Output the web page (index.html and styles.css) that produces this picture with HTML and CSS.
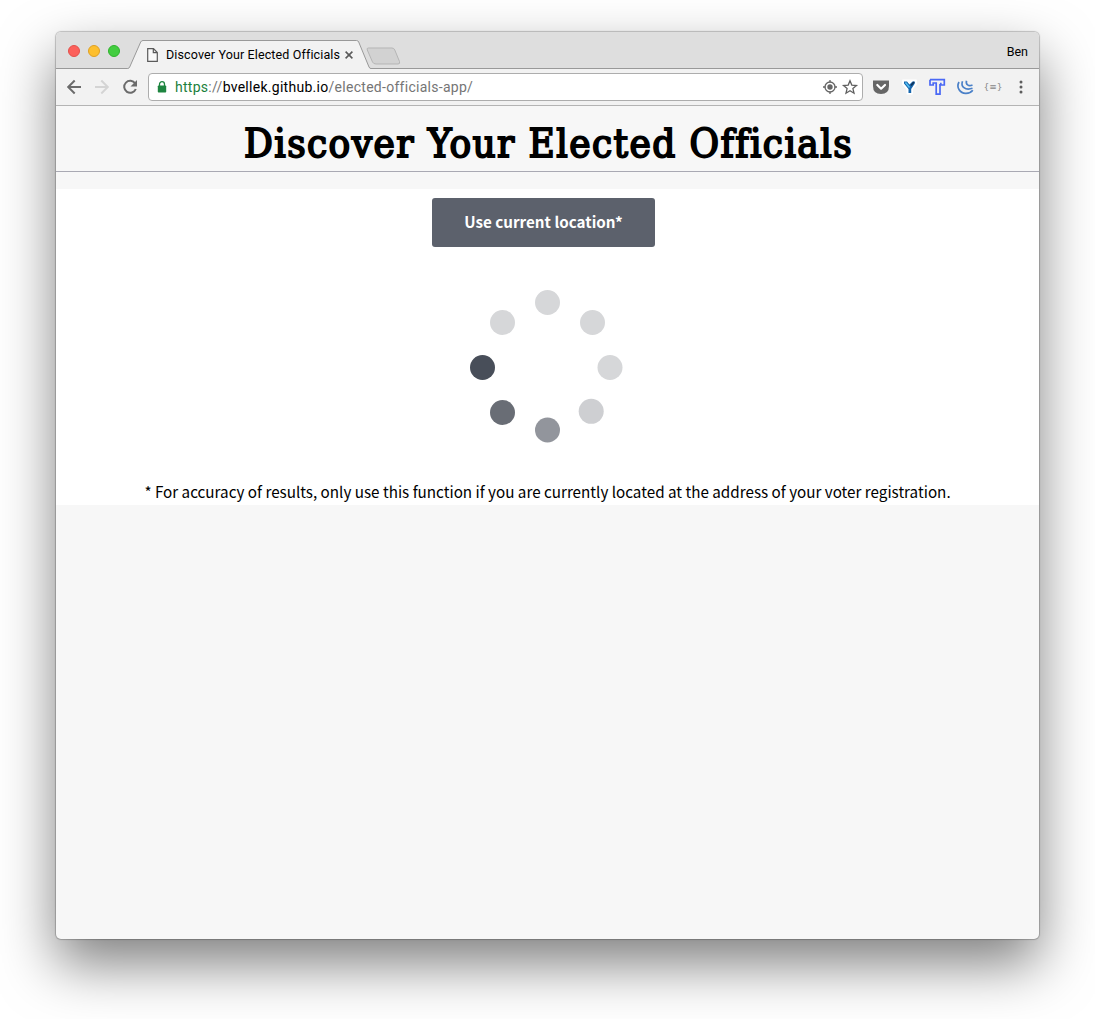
FILE: index.html
```html
<!DOCTYPE html>
<html lang="en">
<head>
<meta charset="utf-8">
<title>Discover Your Elected Officials</title>
<link rel="stylesheet" href="styles.css">
</head>
<body>
<div class="window">
  <div class="tabbar">
    <div class="lights"><span class="light red"></span><span class="light yellow"></span><span class="light green"></span></div>
    <div class="tab">
      <svg class="tab-shape" width="276" height="37" viewBox="0 0 276 37"><path d="M0 36.500H1.500Q3 36.500 3.700 35L14.700 10Q15.400 8.500 17 8.500H230.500Q232 8.500 232.700 10L243 35Q243.700 36.500 245 36.500H248V37H0Z" fill="#f2f2f2"/><path d="M0 36.500H1.500Q3 36.500 3.700 35L14.700 10Q15.400 8.500 17 8.500H230.500Q232 8.500 232.700 10L243 35Q243.700 36.500 245 36.500H248" fill="none" stroke="#999"/><path d="M242.300 16H266Q268 16 268.800 18L273.500 29.500Q274.300 32 272 32H250Q247.500 32 246.500 30L241.300 18Q240.500 16 242.300 16Z" fill="#d2d2d2" stroke="#b5b5b5"/></svg>
      <svg class="page-icon" width="11" height="14" viewBox="0 0 11 14"><path d="M.7.700H6.500L10.300 4.500V13.300H.7ZM6.300.700V4.700H10.300" fill="#fafafa" stroke="#5a5a5a" stroke-width="1.200"/></svg>
      <span class="tab-title">Discover Your Elected Officials</span>
      <svg class="tab-close" width="8" height="8" viewBox="0 0 8 8"><path d="M.6.600 7.400 7.400M7.400.600.600 7.400" stroke="#5a5a5a" stroke-width="1.600"/></svg>
    </div>
    <span class="profile">Ben</span>
  </div>
  <div class="toolbar">
    <svg class="nav" width="90" height="36" viewBox="0 0 90 36"><g fill="none" stroke-width="2"><path d="M25 18H12.500M18.700 11.500 12.200 18 18.700 24.500" stroke="#6b6b6b"/><path d="M39 18H51.500M45.300 11.500 51.800 18 45.300 24.500" stroke="#d4d4d4"/><path d="M79.200 14.500A6 6 0 1 0 79.800 20" stroke="#6b6b6b"/></g><path d="M81 11V17.500H74.500Z" fill="#6b6b6b"/></svg>
    <div class="address">
      <svg class="lock" width="10" height="12" viewBox="0 0 10 12"><path d="M2.500 5V3.200a2.400 2.400 0 0 1 5 0V5" fill="none" stroke="#1e8540" stroke-width="1.300"/><rect x=".8" y="4.500" width="8.400" height="7" rx=".8" fill="#1e8540"/></svg>
      <span class="url"><span class="secure">https</span><span class="dim">://</span>bvellek.github.io<span class="dim">/elected-officials-app/</span></span>
      <svg class="page-actions" width="38" height="16" viewBox="0 0 38 16"><circle cx="8" cy="8" r="5" fill="none" stroke="#666" stroke-width="1.300"/><circle cx="8" cy="8" r="2.700" fill="#666"/><path d="M8 1V3.500M8 12.500V15M1 8H3.500M12.500 8H15" stroke="#666" stroke-width="1.300"/><path d="m28 1.700 1.800 4.400 4.700.4-3.600 3.100 1.100 4.600-4-2.500-4 2.500 1.100-4.600-3.600-3.100 4.700-.4Z" fill="none" stroke="#606060" stroke-width="1.300"/></svg>
    </div>
    <svg class="extensions" width="166" height="36" viewBox="0 0 166 36">
      <path d="M0 11.500h16V17q0 8-8 8T0 17Z" fill="#666"/><path d="m4.300 16 3.800 3.700L12 16" fill="none" stroke="#fff" stroke-width="2.200" stroke-linecap="round" stroke-linejoin="round"/>
      <path d="M30 11.500h13v3.500L39 20v4.500h-4.500v-4.500L30 15Z" fill="#fff" stroke="#fff" stroke-width="2" stroke-linejoin="round"/><path d="M31 12.500h3l2.500 3 3-3h2.300v2L38.200 20v4h-2.700v-4L31 14.500Z" fill="#1766ad"/><path d="m32.500 13.500 4 5" fill="none" stroke="#57c1f3" stroke-width="1.500"/><path d="m38 16.500 3-3.600" stroke="#113359" stroke-width="1.600"/>
      <path d="M57 10.700H71.300V16H67.800V13.700M57 10.700V16H60.200V14H63.200V25.200H67V15" fill="none" stroke="#4a68f5" stroke-width="1.700"/>
      <path d="M86 13C83 18.500 87 24.500 93 24.300Q97.500 24.200 99.800 21.200M89.500 12.200C87.500 17.500 92 21.800 99.500 19.300M93.500 11.700C92.500 15.500 95.500 17.700 99.500 16" fill="none" stroke="#4a80c8" stroke-width="1.700"/>
      <text x="120" y="21" text-anchor="middle" class="braces">{≡}</text>
      <circle cx="148" cy="13" r="1.500" fill="#5d5d5d"/><circle cx="148" cy="18" r="1.500" fill="#5d5d5d"/><circle cx="148" cy="23" r="1.500" fill="#5d5d5d"/>
    </svg>
  </div>
  <header class="page-header"><h1>Discover Your Elected Officials</h1></header>
  <main class="content">
    <button class="locate">Use current location*</button>
    <svg class="spinner" width="153" height="153" viewBox="470 290 153 153"><g fill="#d6d7d9"><circle cx="547.500" cy="302.500" r="12.500"/><circle cx="592.500" cy="322.500" r="12.500"/><circle cx="610" cy="367.500" r="12.500"/><circle cx="502.500" cy="322.500" r="12.500"/></g><circle cx="591.200" cy="411.300" r="12.500" fill="#cecfd2"/><circle cx="547.500" cy="430" r="12.500" fill="#92959c"/><circle cx="502.500" cy="412.500" r="12.500" fill="#696d75"/><circle cx="482.500" cy="367.500" r="12.500" fill="#484e59"/></svg>
    <p class="note">* For accuracy of results, only use this function if you are currently located at the address of your voter registration.</p>
  </main>
</div>
</body>
</html>
```
FILE: styles.css
```css
* { box-sizing: border-box; }
body { margin: 0; background: #fff; min-height: 1019px; overflow: hidden; }
.window {
  width: 983px; height: 907px; margin: 32px 0 0 56px;
  background: #f7f7f7; border-radius: 5px; overflow: hidden;
  box-shadow: 0 0 1px 1px rgba(0,0,0,.22), 0 25px 55px rgba(0,0,0,.5);
}
.tabbar {
  height: 37px; display: flex; align-items: center;
  background: #dedede; border-bottom: 1px solid #999;
  font: 12.5px Roboto, sans-serif;
}
.lights { display: flex; gap: 8px; width: 70px; padding: 2px 0 0 12px; }
.light { width: 12px; height: 12px; border-radius: 50%; border: 1px solid; }
.red { background: #fc605b; border-color: #e3504b; }
.yellow { background: #fdbf2e; border-color: #dfa023; }
.green { background: #43cd40; border-color: #2fb32c; }
.tab { position: relative; width: 276px; height: 37px; flex: none; display: flex; align-items: center; padding: 8px 0 0 21px; margin-bottom: -1px; }
.tab-shape { position: absolute; left: 0; top: 0; }
.page-icon, .tab-title, .tab-close { position: relative; flex: none; }
.tab-title { margin-left: 8px; width: 174px; white-space: nowrap; color: #000; letter-spacing: .13px; }
.tab-close { margin-left: 5px; }
.profile { margin: 2px 11px 0 auto; }
.toolbar {
  height: 37px; display: flex; align-items: center;
  background: #f2f2f2; border-bottom: 1px solid #b4b4b4;
}
.nav { flex: none; }
.address {
  width: 715px; height: 28px; margin-left: 2px; padding: 0 2px 0 8px;
  display: flex; align-items: center;
  background: #fff; border: 1px solid #adadad; border-radius: 4px;
}
.url { margin-left: 8px; font: 14px Roboto, sans-serif; letter-spacing: .28px; white-space: nowrap; color: #000; }
.secure { color: #1b7f3b; }
.dim { color: #757575; }
.page-actions { margin-left: auto; }
.extensions { margin-left: 10px; flex: none; }
.braces { font: 9px "DejaVu Sans", sans-serif; fill: #888; }
.page-header { height: 66px; border-bottom: 1px solid #a9a9b3; text-align: center; }
h1 {
  margin: 0; padding: 8px 0 0 2px; white-space: nowrap; color: #000;
  font: 40px/58px "DejaVu Serif Condensed", "DejaVu Serif", serif; font-stretch: condensed;
  letter-spacing: 1.43px; -webkit-text-stroke: 1.8px #000; font-variant-ligatures: none;
}
.content { margin-top: 17px; height: 316px; padding-top: 9px; background: #fff; display: flex; flex-direction: column; align-items: center; }
.locate {
  width: 223px; height: 49px; margin-right: 8px; padding: 0 0 2px; border: 0; border-radius: 3px;
  background: #5c616c; color: #fff; white-space: nowrap;
  font: bold 15.2px/47px "Noto Sans CJK SC", sans-serif;
}
.spinner { margin: 43px 0 0 -2px; }
.note { margin: 35px 0 0; white-space: nowrap; color: #000; font: 15.22px/26px "Noto Sans CJK SC", sans-serif; }
```
